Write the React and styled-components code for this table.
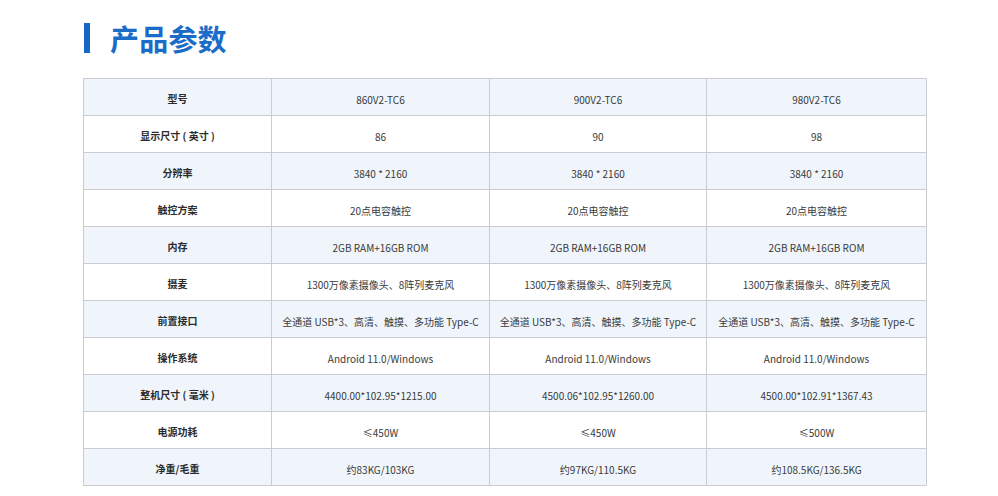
import React from "react";
import styled, { createGlobalStyle } from "styled-components";

const Global = createGlobalStyle`
  html, body { margin: 0; padding: 0; background: #fff; }
  body { font-family: "Noto Sans CJK SC", "Noto Sans", sans-serif; }
`;

const Page = styled.div`
  padding: 23px 0 0 84px;
`;

const Heading = styled.div`
  display: flex;
  align-items: center;
  gap: 20px;
  height: 30px;
`;

const Bar = styled.span`
  width: 6px;
  height: 30px;
  background: #1667c6;
`;

const Title = styled.h1`
  margin: 0;
  font-size: 29px;
  line-height: 30px;
  font-weight: 700;
  color: #1a6cc8;
  letter-spacing: 0.2px;
`;

const Table = styled.table`
  margin-top: 25px;
  margin-left: -1px;
  width: 843px;
  border-collapse: collapse;
  table-layout: fixed;
`;

const Col = styled.col`
  width: ${(p) => p.$w}px;
`;

const Row = styled.tr`
  background: ${(p) => (p.$shade ? "#eff5fb" : "#ffffff")};
`;

const Cell = styled.td`
  height: 37px;
  box-sizing: border-box;
  padding: ${(p) => (p.$label ? "2px 0 0" : "4px 0 0")};
  border: 1px solid #c9cdd2;
  text-align: center;
  vertical-align: middle;
  font-size: 10px;
  white-space: nowrap;
  color: ${(p) => (p.$label ? "#2b2b2b" : "#3a3a3a")};
  font-weight: ${(p) => (p.$label ? 600 : 400)};
`;

const widths = [188, 218, 217, 220];

const rows = [
  ["型号", "860V2-TC6", "900V2-TC6", "980V2-TC6"],
  ["显示尺寸 ( 英寸 )", "86", "90", "98"],
  ["分辨率", "3840 * 2160", "3840 * 2160", "3840 * 2160"],
  ["触控方案", "20点电容触控", "20点电容触控", "20点电容触控"],
  ["内存", "2GB RAM+16GB ROM", "2GB RAM+16GB ROM", "2GB RAM+16GB ROM"],
  ["摄麦", "1300万像素摄像头、8阵列麦克风", "1300万像素摄像头、8阵列麦克风", "1300万像素摄像头、8阵列麦克风"],
  ["前置接口", "全通道 USB*3、高清、触摸、多功能 Type-C", "全通道 USB*3、高清、触摸、多功能 Type-C", "全通道 USB*3、高清、触摸、多功能 Type-C"],
  ["操作系统", "Android 11.0/Windows", "Android 11.0/Windows", "Android 11.0/Windows"],
  ["整机尺寸 ( 毫米 )", "4400.00*102.95*1215.00", "4500.06*102.95*1260.00", "4500.00*102.91*1367.43"],
  ["电源功耗", "≤450W", "≤450W", "≤500W"],
  ["净重/毛重", "约83KG/103KG", "约97KG/110.5KG", "约108.5KG/136.5KG"],
];

export default function App() {
  return (
    <>
      <Global />
      <Page>
        <Heading>
          <Bar />
          <Title>产品参数</Title>
        </Heading>
        <Table>
          <colgroup>
            {widths.map((w, i) => (
              <Col key={i} $w={w} />
            ))}
          </colgroup>
          <tbody>
            {rows.map((r, i) => (
              <Row key={i} $shade={i % 2 === 0}>
                {r.map((c, j) => (
                  <Cell key={j} $label={j === 0}>
                    {c}
                  </Cell>
                ))}
              </Row>
            ))}
          </tbody>
        </Table>
      </Page>
    </>
  );
}
